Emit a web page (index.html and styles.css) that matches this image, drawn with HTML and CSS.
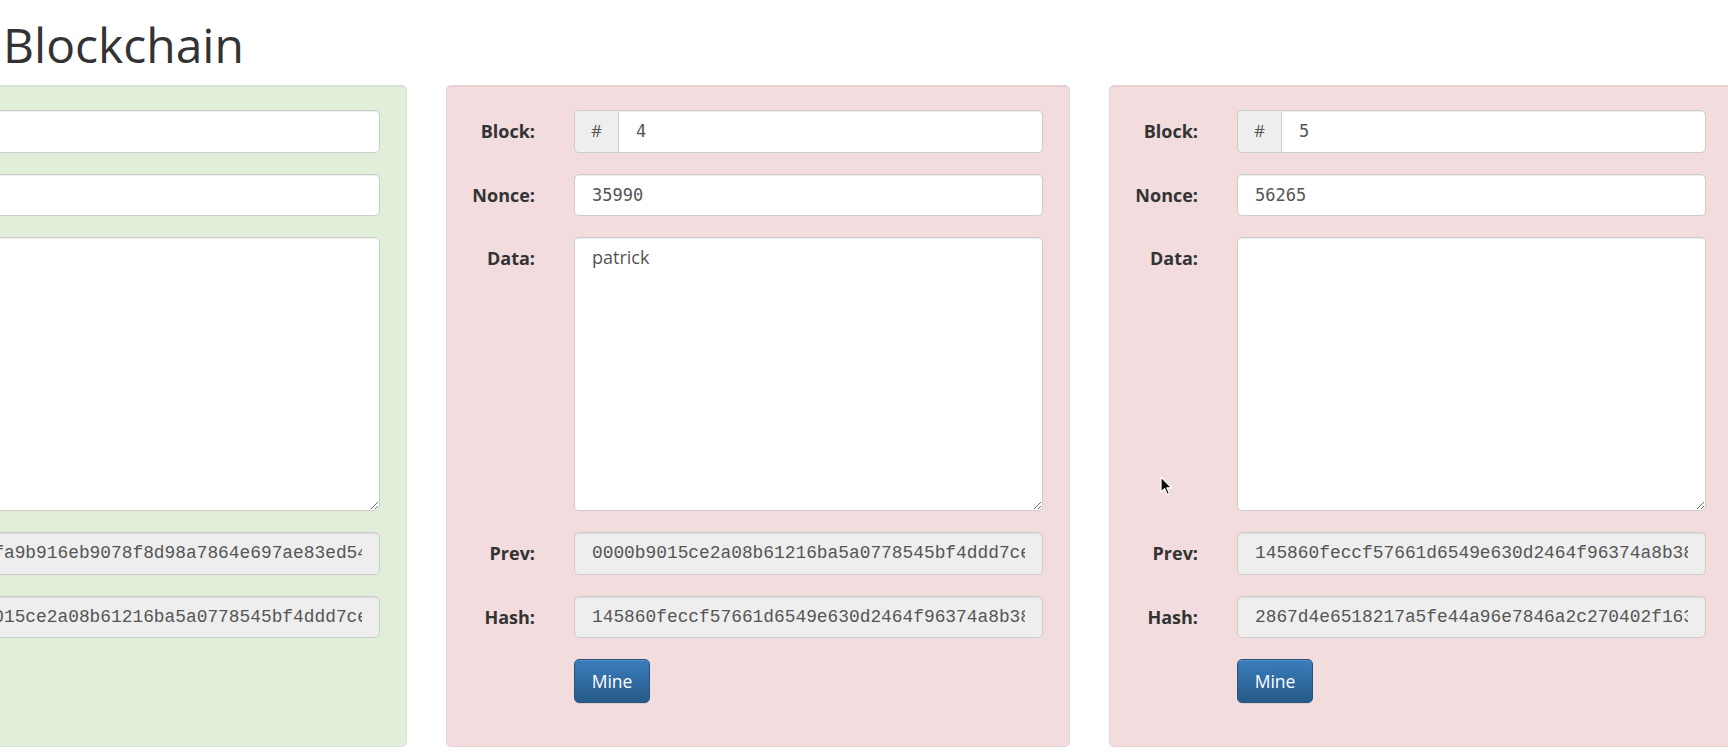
FILE: index.html
```html
<!DOCTYPE html>
<html lang="en">
<head>
<meta charset="utf-8">
<title>Blockchain</title>
<link rel="stylesheet" href="styles.css">
</head>
<body>
<h1 class="title">Blockchain</h1>
<div class="chain">
  <form class="block ok">
    <label class="lbl">Block:</label>
    <div class="group"><span class="addon">#</span><input class="field num" value="3"></div>
    <label class="lbl">Nonce:</label>
    <input class="field num" value="11316">
    <label class="lbl">Data:</label>
    <textarea class="field area"></textarea>
    <label class="lbl">Prev:</label>
    <input class="field hash" readonly value="0000a7fa9b916eb9078f8d98a7864e697ae83ed54c1e09b7d2f63a8e5b40d9f1">
    <label class="lbl">Hash:</label>
    <input class="field hash" readonly value="0000b9015ce2a08b61216ba5a0778545bf4ddd7ce6a1d0c9f2b83e4a7d51c6f0">
    <div class="actions"><button type="button" class="mine">Mine</button></div>
  </form>
  <form class="block bad">
    <label class="lbl">Block:</label>
    <div class="group"><span class="addon">#</span><input class="field num" value="4"></div>
    <label class="lbl">Nonce:</label>
    <input class="field num" value="35990">
    <label class="lbl">Data:</label>
    <textarea class="field area">patrick</textarea>
    <label class="lbl">Prev:</label>
    <input class="field hash" readonly value="0000b9015ce2a08b61216ba5a0778545bf4ddd7ce6a1d0c9f2b83e4a7d51c6f0">
    <label class="lbl">Hash:</label>
    <input class="field hash" readonly value="145860feccf57661d6549e630d2464f96374a8b38e2f1d07c4a95b63e0d7f2a1">
    <div class="actions"><button type="button" class="mine">Mine</button></div>
  </form>
  <form class="block bad">
    <label class="lbl">Block:</label>
    <div class="group"><span class="addon">#</span><input class="field num" value="5"></div>
    <label class="lbl">Nonce:</label>
    <input class="field num" value="56265">
    <label class="lbl">Data:</label>
    <textarea class="field area"></textarea>
    <label class="lbl">Prev:</label>
    <input class="field hash" readonly value="145860feccf57661d6549e630d2464f96374a8b38e2f1d07c4a95b63e0d7f2a1">
    <label class="lbl">Hash:</label>
    <input class="field hash" readonly value="2867d4e6518217a5fe44a96e7846a2c270402f163b9d0e5a7c21f48e6d0b93a5">
    <div class="actions"><button type="button" class="mine">Mine</button></div>
  </form>
</div>
<svg class="cursor" width="14" height="22" viewBox="0 0 14 22" aria-hidden="true">
  <path d="M1 1 L1 16 L4.6 12.6 L7.2 18.6 L9.4 17.6 L6.9 11.8 L11.6 11.8 Z" fill="#111" stroke="#fff" stroke-width="1.2" stroke-linejoin="round"/>
</svg>
</body>
</html>
```

FILE: styles.css
```css
html, body {
  margin: 0;
  padding: 0;
  overflow: hidden;
  background: #ffffff;
}

body {
  position: relative;
  width: 1728px;
  height: 752px;
  font-family: "Open Sans", Lato, "Liberation Sans", sans-serif;
  color: #333333;
}

.title {
  margin: 21px 0 0 3px;
  font-size: 48px;
  font-weight: 400;
  line-height: 48px;
  color: #333333;
}

.chain {
  display: flex;
  gap: 39px;
  margin: 16px 0 0 -217px;
}

.block {
  box-sizing: border-box;
  flex: 0 0 624px;
  width: 624px;
  height: 662px;
  margin: 0;
  border: 1px solid #e0d3d4;
  border-radius: 5px;
  padding: 24px 26px 0 0;
  box-shadow: inset 0 1px 1px rgba(0, 0, 0, 0.05);
  display: grid;
  grid-template-columns: 88px 469px;
  column-gap: 39px;
  row-gap: 21px;
  align-content: start;
}

.block.ok {
  background: #e1efda;
  border-color: #d7e3d1;
}

.block.bad {
  background: #f2dcde;
  border-color: #e6d2d4;
}

.lbl {
  display: block;
  text-align: right;
  font-size: 18px;
  font-weight: 700;
  line-height: 42.5px;
  height: 42.5px;
  color: #333333;
}

.field {
  box-sizing: border-box;
  display: block;
  width: 100%;
  height: 42.5px;
  margin: 0;
  padding: 0 17px;
  border: 1px solid #cccccc;
  border-radius: 5px;
  background: #ffffff;
  color: #555555;
  box-shadow: inset 0 1px 1px rgba(0, 0, 0, 0.075);
  outline: none;
}

.num {
  font-family: "DejaVu Sans Mono", "Liberation Mono", monospace;
  font-size: 17px;
}

.hash {
  font-family: "Liberation Mono", "Courier New", monospace;
  font-size: 17.85px;
  background: #eeeeee;
}

.area {
  height: 274px;
  padding: 6px 17px;
  resize: vertical;
  font-family: "Open Sans", Lato, sans-serif;
  font-size: 18px;
  line-height: 26px;
}

.group {
  display: flex;
  width: 100%;
}

.group .field {
  flex: 1 1 auto;
  border-radius: 0 5px 5px 0;
}

.addon {
  box-sizing: border-box;
  flex: 0 0 44px;
  height: 42.5px;
  border: 1px solid #cccccc;
  border-right: 0;
  border-radius: 5px 0 0 5px;
  background: #eeeeee;
  color: #555555;
  text-align: center;
  font-size: 17px;
  line-height: 40.5px;
}

.actions {
  grid-column: 2;
  display: flex;
}

.mine {
  box-sizing: border-box;
  height: 44px;
  width: 76px;
  padding: 0;
  border: 1px solid #245580;
  border-radius: 5px;
  background: linear-gradient(to bottom, #3a7dbb 0%, #265a88 100%);
  color: #ffffff;
  font-family: "Open Sans", Lato, sans-serif;
  font-size: 17.5px;
  font-weight: 400;
  box-shadow: inset 0 1px 0 rgba(255, 255, 255, 0.15), 0 1px 1px rgba(0, 0, 0, 0.075);
}

.cursor {
  position: absolute;
  left: 1160px;
  top: 476px;
}
```
